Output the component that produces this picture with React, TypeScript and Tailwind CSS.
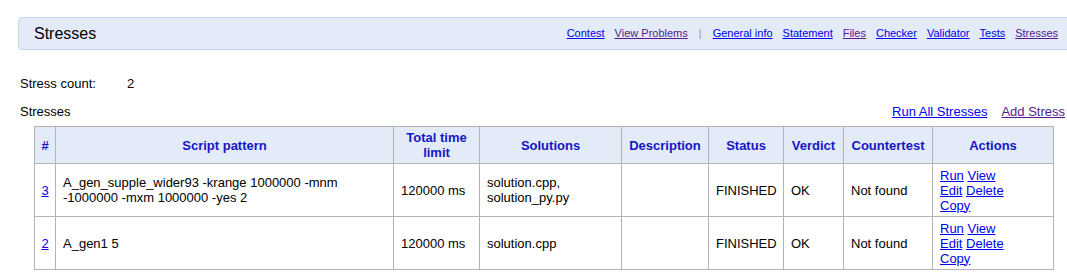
const navLinks = [
  { label: "Contest", visited: false },
  { label: "View Problems", visited: true },
  { label: "|", sep: true },
  { label: "General info", visited: false },
  { label: "Statement", visited: false },
  { label: "Files", visited: true },
  { label: "Checker", visited: false },
  { label: "Validator", visited: false },
  { label: "Tests", visited: false },
  { label: "Stresses", visited: true },
];

const columns = [
  { title: "#", width: 21 },
  { title: "Script pattern", width: 338 },
  { title: "Total time limit", width: 86 },
  { title: "Solutions", width: 142 },
  { title: "Description", width: 87 },
  { title: "Status", width: 75 },
  { title: "Verdict", width: 60 },
  { title: "Countertest", width: 89 },
  { title: "Actions", width: 121 },
];

const stresses = [
  {
    id: 3,
    script: "A_gen_supple_wider93 -krange 1000000 -mnm -1000000 -mxm 1000000 -yes 2",
    limit: "120000 ms",
    solutions: "solution.cpp, solution_py.py",
    description: "",
    status: "FINISHED",
    verdict: "OK",
    countertest: "Not found",
  },
  {
    id: 2,
    script: "A_gen1 5",
    limit: "120000 ms",
    solutions: "solution.cpp",
    description: "",
    status: "FINISHED",
    verdict: "OK",
    countertest: "Not found",
  },
];

const Link = ({ children, visited }: { children: React.ReactNode; visited?: boolean }) => (
  <a href="#" className={`underline ${visited ? "text-[#551a8b]" : "text-[#0000ee]"}`}>
    {children}
  </a>
);

export default function App() {
  return (
    <div className="w-[1067px] h-[278px] overflow-hidden bg-white font-['Liberation_Sans',Arial,sans-serif] text-[13px] leading-[15px] text-black">
      <div className="w-[1090px] pl-[18px] pt-[17px]">
        <header className="flex h-[33px] items-center justify-between rounded-[4px] border border-[#c3d6f3] bg-[#e3ebf8] pl-[15px] pr-[31px]">
          <h1 className="text-[16px] leading-[18px]">Stresses</h1>
          <nav className="flex items-center gap-[10px] text-[11px] leading-[13px]">
            {navLinks.map((l) =>
              l.sep ? (
                <span key="sep" className="px-[1px] text-[#a89870]">
                  |
                </span>
              ) : (
                <Link key={l.label} visited={l.visited}>
                  {l.label}
                </Link>
              )
            )}
          </nav>
        </header>

        <div className="mt-[26px] flex pl-[2px]">
          <span className="w-[107px]">Stress count:</span>
          <span>2</span>
        </div>

        <div className="mt-[13px] flex w-[1047px] justify-between pl-[2px]">
          <span>Stresses</span>
          <div className="flex gap-[14px]">
            <Link>Run All Stresses</Link>
            <Link visited>Add Stress</Link>
          </div>
        </div>

        <table className="ml-[16px] mt-[7px] w-[1020px] table-fixed border-collapse">
          <colgroup>
            {columns.map((c) => (
              <col key={c.title} style={{ width: c.width }} />
            ))}
          </colgroup>
          <thead>
            <tr className="h-[37px] bg-[#e3ebf8]">
              {columns.map((c) => (
                <th
                  key={c.title}
                  className="border border-[#b4b4b4] px-[6px] py-[3px] text-center align-middle font-bold text-[#1515c8]"
                >
                  {c.title}
                </th>
              ))}
            </tr>
          </thead>
          <tbody>
            {stresses.map((s) => (
              <tr key={s.id} className="h-[53px]">
                <td className="border border-[#b4b4b4] py-[3px] text-center align-middle">
                  <Link>{s.id}</Link>
                </td>
                <td className="border border-[#b4b4b4] px-[7px] py-[3px] align-middle">{s.script}</td>
                <td className="border border-[#b4b4b4] px-[7px] py-[3px] align-middle">{s.limit}</td>
                <td className="border border-[#b4b4b4] px-[7px] py-[3px] align-middle">{s.solutions}</td>
                <td className="border border-[#b4b4b4] px-[7px] py-[3px] align-middle">{s.description}</td>
                <td className="border border-[#b4b4b4] px-[7px] py-[3px] align-middle">{s.status}</td>
                <td className="border border-[#b4b4b4] px-[7px] py-[3px] align-middle">{s.verdict}</td>
                <td className="border border-[#b4b4b4] px-[7px] py-[3px] align-middle">{s.countertest}</td>
                <td className="border border-[#b4b4b4] px-[7px] py-[3px] align-middle">
                  <div>
                    <Link>Run</Link> <Link>View</Link>
                  </div>
                  <div>
                    <Link>Edit</Link> <Link>Delete</Link>
                  </div>
                  <div>
                    <Link>Copy</Link>
                  </div>
                </td>
              </tr>
            ))}
          </tbody>
        </table>
      </div>
    </div>
  );
}
